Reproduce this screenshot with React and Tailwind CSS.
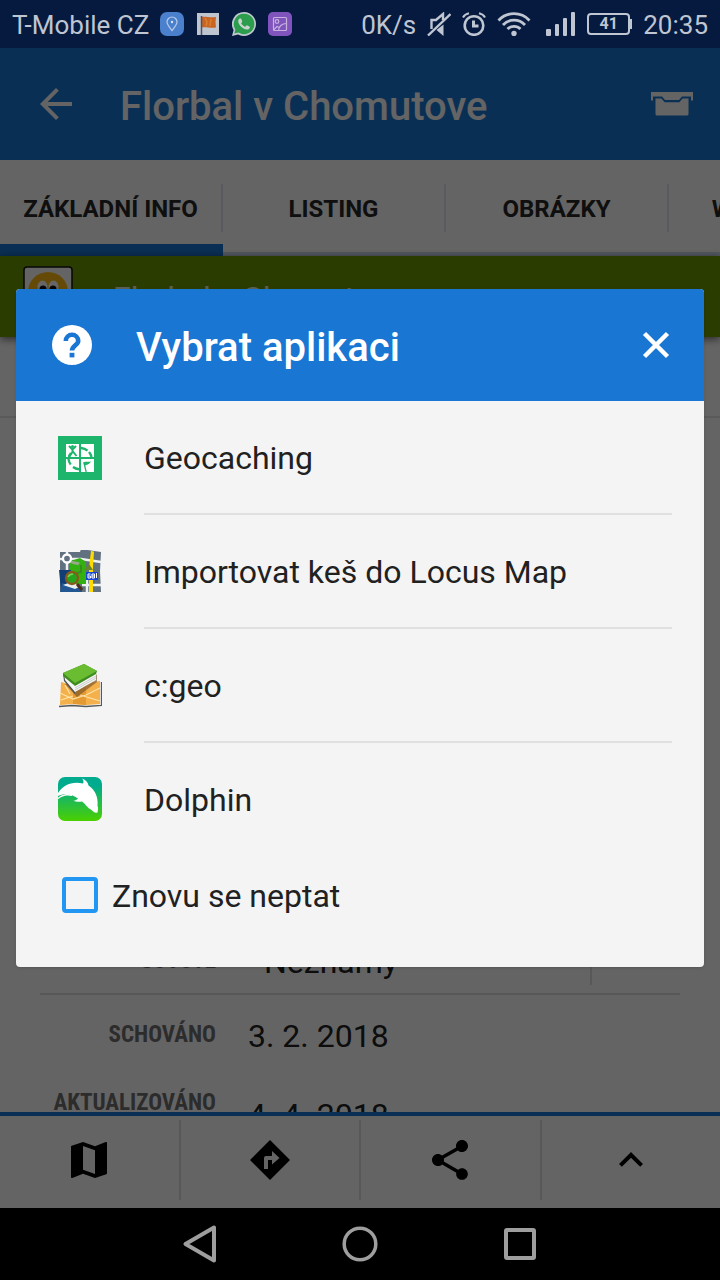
import React from 'react';
import { MdArrowBack, MdExpandLess, MdMap, MdShare } from 'react-icons/md';

const PinBadge = () => (
  <svg viewBox="0 0 24 24" className="size-6">
    <rect width="24" height="24" rx="7" fill="#4a80cc" />
    <path d="M12 18.500C9 14.800 7 12.500 7 10a5 5 0 0 1 10 0c0 2.500-2 4.800-5 8.500z" fill="none" stroke="#b9cdea" strokeWidth="1.200" />
    <circle cx="12" cy="10" r="1.200" fill="#dbe6f6" />
  </svg>
);

const FlagBadge = () => (
  <svg viewBox="0 0 24 24" className="size-6">
    <rect x="1" y="1" width="22" height="22" fill="#bfc5cf" />
    <path d="M5 5c5-1 8 1 15 0l-.5 5 .5 5.500c-6 .8-10-1-15 0z" fill="#c96423" />
    <path d="M9 6l2 4-1 4M15 7l-1 7" stroke="#d98034" strokeWidth="1.500" fill="none" />
    <path d="M5.500 4v19" stroke="#4b5260" strokeWidth="1.500" />
  </svg>
);

const WhatsappBadge = () => (
  <svg viewBox="0 0 24 24" className="size-6">
    <path d="M12 0a12 12 0 0 0-10.400 18L0 24l6-1.600A12 12 0 1 0 12 0z" fill="#bfc8cf" />
    <path d="M12 1.800a10.200 10.200 0 0 0-8.600 15.700L2.300 21.600l4.200-1.100A10.200 10.200 0 1 0 12 1.800z" fill="#2c9d4c" />
    <path d="M8.200 6.200c-.5 0-2 1-2 2.900 0 3.900 5 8.500 8.700 8.500 1.900 0 3-1.500 3-2.400 0-.6-2.600-1.900-3.100-1.900s-1.100 1.500-1.600 1.500c-.9 0-3.900-2.600-3.900-3.500 0-.5 1-1.100 1-1.700 0-.5-1-3.400-2.100-3.400z" fill="#c9d4d0" />
  </svg>
);

const GalleryBadge = () => (
  <svg viewBox="0 0 24 24" className="size-6">
    <rect width="24" height="24" rx="5" fill="#8054bd" />
    <g fill="none" stroke="#c5b2df" strokeWidth="1.200">
      <rect x="5.500" y="5.500" width="13" height="13" rx="1" />
      <circle cx="9" cy="9.500" r="1.800" />
      <path d="M10.500 18.500c0-4 3.500-7 8-7" />
      <path d="M5.500 18l3.500-3.500 2 1" />
    </g>
  </svg>
);

const MuteIcon = () => (
  <svg viewBox="0 0 24 24" className="size-6" fill="none" stroke="currentColor" strokeWidth="2.400">
    <path d="M4.500 17V8h4.500l7-6v6M1 23.500L23.500 2" />
    <path d="M9.500 18l7 6V12.500z" fill="currentColor" stroke="none" />
  </svg>
);

const AlarmIcon = () => (
  <svg viewBox="0 0 24 24" className="size-6" fill="none" stroke="currentColor" strokeWidth="2.600">
    <circle cx="12" cy="13.500" r="9.300" />
    <path d="M11.500 8.500v5.500h5" strokeWidth="3" />
    <path d="M1 5.500C2 3.500 4 1.800 7 1.200M23 5.500C22 3.500 20 1.800 17 1.200" strokeWidth="2" />
  </svg>
);

const WifiIcon = () => (
  <svg viewBox="0 0 34 24" className="h-6 w-[34px]" fill="none" stroke="currentColor" strokeWidth="2.800">
    <path d="M1.500 8.500C10-.6 24-.6 32.500 8.500" />
    <path d="M6 13C12 6.500 22 6.500 28 13" />
    <path d="M10.500 17c3.500-3.600 9.500-3.600 13 0" />
    <circle cx="17" cy="21.500" r="2.700" fill="currentColor" stroke="none" />
  </svg>
);

const SignalIcon = () => (
  <svg viewBox="0 0 30 24" className="ml-1 h-6 w-[30px]" fill="currentColor">
    <rect x="0" y="17" width="5" height="7" rx="1" />
    <rect x="9" y="12" width="4" height="12" rx="1" />
    <rect x="17" y="6" width="4" height="18" rx="1" />
    <rect x="25" y="0" width="4" height="24" rx="1" />
  </svg>
);

const InboxIcon = () => (
  <svg viewBox="0 0 42 24" className="h-6 w-[42px]" fill="currentColor">
    <path d="M0 0h42v8.500h-2V4.500H31L28 8H14l-3-3.500H2v4H0z" />
    <path d="M4.500 6.500h5.800l3.400 3.700h14.600l3.400-3.700h5.800V22a1.500 1.500 0 0 1-1.500 1.500H6A1.500 1.500 0 0 1 4.500 22z" />
  </svg>
);

const HelpIcon = () => (
  <svg viewBox="0 0 24 24" className="size-12">
    <circle cx="12" cy="12" r="10" fill="#fff" />
    <path d="M8.900 10a3.100 3.100 0 0 1 6.200 0c0 2-3.100 2.400-3.100 4.800" fill="none" stroke="#1976d2" strokeWidth="2.300" />
    <rect x="10.800" y="15.900" width="2.400" height="2.300" fill="#1976d2" />
  </svg>
);

const CloseIcon = () => (
  <svg viewBox="0 0 48 48" className="size-12" stroke="currentColor" strokeWidth="4.500">
    <path d="M12.500 12.500l23 23M35.500 12.500l-23 23" />
  </svg>
);

const DirectionsIcon = ({ className }) => (
  <svg viewBox="0 0 48 48" className={className} fill="currentColor" fillRule="evenodd">
    <path d="M24 4l20 20-20 20L4 24zM18 33h4v-9h4v4.500l7.500-6.500L26 15v5h-6q-2 0-2 2z" />
  </svg>
);

const GeocachingLogo = () => (
  <svg viewBox="0 0 44 44" className="size-11">
    <rect width="44" height="44" fill="#1db56c" />
    <path d="M8 8h13v13H8zM23 8h13v13H23zM8 23h13v13H8zM23 23h13v13H23z" fill="#fff" />
    <g fill="none" stroke="#1db56c" strokeWidth="2">
      <path d="M11 10l3.500 3.500L18 10M14.500 13v3L11 21M14.500 15l4 5" />
      <path d="M23 12c3 .2 5 1.200 6.500 2.600M31 16c1.500 1.800 2.200 3.500 2.500 5M13 17c-1.200 1.500-1.800 2.800-2 4M10.500 23c.2 2 1 4 2.200 5.500M15 31c1.800 1.300 3.600 2 6 2.300" strokeWidth="2.400" />
      <path d="M26 27l2.200 9" strokeWidth="1.300" />
    </g>
    <circle cx="14.500" cy="10.500" r="1.500" fill="#1db56c" />
    <path d="M25 26.500c2-1.500 5 0 8-1-1 2-3 3-6 4z" fill="#1db56c" />
  </svg>
);

const LocusLogo = () => (
  <svg viewBox="0 0 44 44" className="size-11">
    <path d="M2 2h20l1-3 20 3-1 19 1 21H2z" fill="#61717f" />
    <path d="M9 1v22M2 9h21l20 3M24 35h19M29 22v20" stroke="#eef1f2" strokeWidth="2.500" />
    <path d="M12 11l10-3 6 4v22H12z" fill="#33b012" />
    <path d="M12 11c3 3 6 1 9 3" stroke="#9aa78f" strokeWidth="3" fill="none" />
    <path d="M23 15v7l-4 1v6" stroke="#3c8a22" strokeWidth="2" fill="none" />
    <path d="M33 1l3 .4-1 15V42h-4V18z" fill="#ffdc00" />
    <path d="M26 20l5-6 4 6z" fill="#69842c" />
    <circle cx="9" cy="8.500" r="4" fill="#61717f" stroke="#fff" strokeWidth="2.300" />
    <path d="M1 20h12v20l-10 1z" fill="#123e76" />
    <path d="M4 33l12 4 8 1v4H2z" fill="#225794" />
    <path d="M5 35l8-3 10 4-6 3z" fill="#e9eeee" />
    <path d="M19 34l5 6" stroke="#4e2f19" strokeWidth="3" />
    <circle cx="14" cy="28" r="6" fill="#25a51c" stroke="#8b5a1b" strokeWidth="2.300" />
    <path d="M10 27c1-2 3-3 5-3" stroke="#77d15d" strokeWidth="1.500" fill="none" />
    <rect x="28" y="22" width="12" height="8" fill="#1746d0" />
    <path d="M32.500 24h-2.500v4h2.500v-2h-2M34 24h2.500v4H34zM34 26h2M38.500 23v5" fill="none" stroke="#fff" strokeWidth="1" />
  </svg>
);

const CgeoLogo = () => (
  <svg viewBox="0 0 44 44" className="size-11">
    <path d="M1 42.500l13-1 14 1 15.500-1V18" fill="none" stroke="#55595a" strokeWidth="1.300" />
    <path d="M3 18l12 3 13-2 14-2v23l-14 1-13-1-13 1z" fill="#f4b04a" />
    <path d="M15 21l13-2v22l-13-1z" fill="#e59932" />
    <path d="M2 29l13 6 13-4 14-7M22 31l20 6M3 36l12-4M7 21l5 9" fill="none" stroke="#ffe2a4" strokeWidth="1.200" />
    <path d="M7 20l12 13 20-15V10l-6 8z" fill="#6d4c27" opacity=".6" />
    <path d="M5 9l12 13v8L6 17z" fill="#4a5350" />
    <path d="M7 16l10 12 21-12V8L17 20 6 9z" fill="#f5f6f5" />
    <path d="M17 24l21-12M17 26l21-12" stroke="#c8cecb" strokeWidth="1" />
    <path d="M5 9L26 0l13 7-1 3-21 12L5 12z" fill="#3f8d20" />
    <path d="M5 9L26 0l13 7-22 12z" fill="#6abd30" />
  </svg>
);

const DolphinLogo = () => (
  <svg viewBox="0 0 44 44" className="size-11">
    <defs>
      <linearGradient id="dolphin-bg" x1="0" y1="0" x2="0" y2="1">
        <stop offset="0.200" stopColor="#00ab8e" />
        <stop offset="1" stopColor="#4bd000" />
      </linearGradient>
    </defs>
    <rect width="44" height="44" rx="7" fill="url(#dolphin-bg)" />
    <path d="M0 16C5 8 14 4 25 6.500 26 5 25.500 3 24 1.500c4 1.500 6 4 6.500 7C37 13 40.500 20 39.500 29c1 2 .5 4 0 6.500-2 1-4-.5-6-2.500-4-2-6-6-9.500-8.500-3 .5-6 .5-8.500-.8 2-.3 3.500-1 4.500-2.200C14 17 6 16 0 19z" fill="#fff" />
    <path d="M0 21.500c4-3.500 9-4.500 14-3" fill="none" stroke="#fff" strokeWidth="1.300" />
  </svg>
);

const CacheIcon = () => (
  <svg viewBox="0 0 50 50" className="size-[50px]">
    <rect x="1" y="1" width="48" height="48" rx="3" fill="#fafafa" stroke="#111" strokeWidth="1.500" />
    <circle cx="25" cy="26" r="20" fill="#fdb913" />
    <ellipse cx="19.500" cy="21" rx="5" ry="6.500" fill="#fff" />
    <ellipse cx="30.500" cy="21" rx="5" ry="6.500" fill="#fff" />
    <circle cx="20" cy="23" r="3.500" fill="#111" />
    <circle cx="30" cy="23" r="3.500" fill="#111" />
  </svg>
);

const tabs = ['ZÁKLADNÍ INFO', 'LISTING', 'OBRÁZKY', 'WAYPOINTY'];

const apps = [
  { name: 'Geocaching', Logo: GeocachingLogo },
  { name: 'Importovat keš do Locus Map', Logo: LocusLogo },
  { name: 'c:geo', Logo: CgeoLogo },
  { name: 'Dolphin', Logo: DolphinLogo }
];

const actions = [
  { label: 'Mapa', Icon: MdMap },
  { label: 'Navigace', Icon: DirectionsIcon },
  { label: 'Sdílet', Icon: MdShare },
  { label: 'Více', Icon: MdExpandLess }
];

const StatusBar = () => (
  <div className="flex h-12 shrink-0 items-center justify-between bg-[#061a40] px-3 text-[26px] whitespace-nowrap text-[#bfc5d1]">
    <div className="flex items-center gap-[11px]">
      <span className="pt-0.5">T-Mobile CZ</span>
      <div className="flex items-center gap-3">
        <PinBadge />
        <FlagBadge />
        <WhatsappBadge />
        <GalleryBadge />
      </div>
    </div>
    <div className="flex items-center gap-[11px]">
      <span className="pt-0.5">0K/s</span>
      <MuteIcon />
      <AlarmIcon />
      <WifiIcon />
      <SignalIcon />
      <div className="flex items-center">
        <span className="flex h-[22px] w-[43px] items-center justify-center rounded border-2 border-current text-base font-bold">41</span>
        <span className="h-2.5 w-0.5 bg-current"></span>
      </div>
      <span className="pt-0.5">20:35</span>
    </div>
  </div>
);

const InfoRow = ({ label, value, className = '', valueClass = 'ml-8' }) => (
  <div className={`flex ${className}`}>
    <dt className="w-44 shrink-0 text-right font-['Roboto_Condensed','Liberation_Sans_Narrow',sans-serif] text-[23px] leading-8 font-bold text-[#6e6e6e]">
      {label}
    </dt>
    <dd className={`pt-0.5 text-[32px] text-[#212121] ${valueClass}`}>{value}</dd>
  </div>
);

const CacheDetail = () => (
  <div className="flex h-full flex-col">
    <header className="flex h-28 shrink-0 items-center bg-[#1976d2] px-6 text-[#fafafa]">
      <button aria-label="Zpět" className="flex w-16 justify-start pl-2">
        <MdArrowBack className="size-12" />
      </button>
      <h1 className="ml-8 flex-1 truncate pt-1.5 text-[40px] font-medium">Florbal v Chomutove</h1>
      <button aria-label="Archiv" className="mr-[3px]">
        <InboxIcon />
      </button>
    </header>

    <nav className="flex h-24 shrink-0 overflow-hidden bg-[#fafafa] text-2xl font-bold text-[#262626]">
      {tabs.map((tab, i) => (
        <button
          key={tab}
          className={`flex w-[223px] shrink-0 items-center ${i === 0 ? 'border-b-12 border-[#1976d2] pt-3' : 'border-b-4 border-[#d0dbee] pt-1'}`}
        >
          <span className="flex h-12 flex-1 items-center justify-center border-r-2 border-[#dbe1e8] pt-0.5">{tab}</span>
        </button>
      ))}
    </nav>

    <div className="z-10 flex h-[81px] shrink-0 bg-[#6c9700] px-[23px] pt-2.5 shadow-[0_2px_8px_rgba(0,0,0,0.6)]">
      <CacheIcon />
      <p className="ml-10 pt-4 text-[32px] leading-none text-white/85">Florbal v Chomutove</p>
    </div>

    <div className="flex-1 overflow-hidden bg-[#fafafa]">
      <div className="h-[81px] border-b-2 border-[#e0e0e0]"></div>
      <dl className="mx-10 pt-[511px]">
        <div className="flex h-[66px] items-start border-b-2 border-[#dcdcdc]">
          <InfoRow label="GCVOTE" value="Neznámý" className="h-16 flex-1 items-center" valueClass="ml-12" />
          <div className="mr-[88px] h-14 w-0.5 bg-[#dcdcdc]"></div>
        </div>
        <InfoRow label="SCHOVÁNO" value="3. 2. 2018" className="h-20 items-center" />
        <InfoRow label="AKTUALIZOVÁNO" value="4. 4. 2018" className="h-20 items-start pt-3" valueClass="ml-8 pt-1" />
      </dl>
    </div>

    <div className="flex h-24 shrink-0 border-t-4 border-[#1976d2] bg-[#fafafa] pt-1 text-black">
      {actions.map(({ label, Icon }) => (
        <button
          key={label}
          aria-label={label}
          className="flex h-20 flex-1 items-center justify-center border-r-2 border-[#dcdcdc] last:border-r-0"
        >
          <Icon className="size-12" />
        </button>
      ))}
    </div>
  </div>
);

const AppPicker = () => (
  <div className="absolute inset-0 z-20 flex items-center justify-center bg-black/60 px-4">
    <section role="dialog" aria-labelledby="picker-title" className="w-full overflow-hidden rounded bg-[#f4f4f4] text-[#212121] shadow-sm">
      <div className="flex h-28 items-center bg-[#1976d2] px-8 text-white">
        <HelpIcon />
        <h2 id="picker-title" className="ml-10 flex-1 pt-1.5 text-[40px] font-medium">Vybrat aplikaci</h2>
        <button aria-label="Zavřít" className="-mr-2">
          <CloseIcon />
        </button>
      </div>
      <ul>
        {apps.map(({ name, Logo }) => (
          <li key={name} className="group">
            <button className="flex w-full items-center gap-[42px] pr-8 pl-[42px] text-left text-[32px]">
              <Logo />
              <span className="flex h-[114px] flex-1 items-center border-b-2 border-[#e0e0e0] pt-0.5 group-last:h-28 group-last:border-b-0">
                {name}
              </span>
            </button>
          </li>
        ))}
      </ul>
      <label className="mb-8 flex h-20 items-center gap-3.5 pl-[46px] text-[32px]">
        <input type="checkbox" className="size-9 appearance-none rounded border-4 border-[#2196f3] checked:bg-[#2196f3]" />
        <span className="pt-0.5">Znovu se neptat</span>
      </label>
    </section>
  </div>
);

const SystemNav = () => (
  <div className="flex h-18 shrink-0 items-center justify-center gap-[120px] bg-black text-[#9e9e9e]">
    <button aria-label="Zpět">
      <svg viewBox="0 0 40 40" className="size-10" fill="none" stroke="currentColor" strokeWidth="4" strokeLinejoin="round">
        <path d="M34 3.500v33L5.500 20z" />
      </svg>
    </button>
    <button aria-label="Domů">
      <svg viewBox="0 0 40 40" className="size-10" fill="none" stroke="currentColor" strokeWidth="3.500">
        <circle cx="20" cy="20" r="15.800" />
      </svg>
    </button>
    <button aria-label="Přehled">
      <svg viewBox="0 0 40 40" className="size-10" fill="none" stroke="currentColor" strokeWidth="4">
        <rect x="6" y="6" width="28" height="28" rx="1" />
      </svg>
    </button>
  </div>
);

const App = () => (
  <div className="flex h-screen flex-col overflow-hidden font-[Roboto,sans-serif]">
    <StatusBar />
    <main className="relative min-h-0 flex-1">
      <CacheDetail />
      <AppPicker />
    </main>
    <SystemNav />
  </div>
);

export default App;
